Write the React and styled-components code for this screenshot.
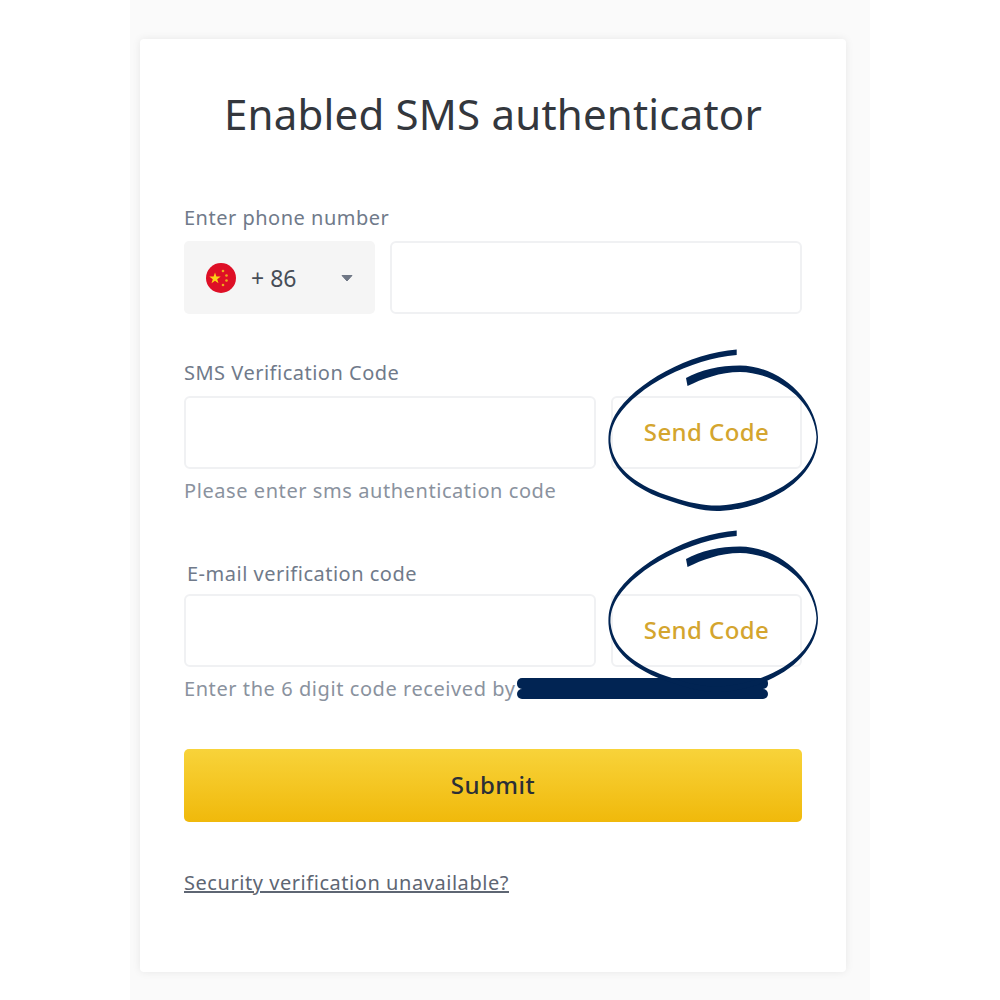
import React from 'react'
import styled, { createGlobalStyle } from 'styled-components';

const GlobalStyle = createGlobalStyle`
  html, body {
    margin: 0;
    padding: 0;
    background: #fff;
    font-family: "Noto Sans", "Open Sans", sans-serif;
  }
`;

const Page = styled.div`
  box-sizing: border-box;
  width: 740px;
  height: 1000px;
  margin-left: 130px;
  padding: 39px 24px 0 10px;
  background: #fafafa;
`;

const Card = styled.div`
  box-sizing: border-box;
  height: 933px;
  padding: 0 44px;
  background: #fff;
  border-radius: 4px;
  box-shadow: 0 0 8px rgba(0, 0, 0, 0.08);
`;

const Title = styled.h1`
  margin: 0;
  padding-top: 49px;
  height: 52px;
  line-height: 52px;
  font-size: 42px;
  font-weight: 400;
  letter-spacing: 0.2px;
  color: #33373d;
  text-align: center;
`;

const Section = styled.div`
  position: relative;
  margin-top: ${({ top }) => top}px;
`;

const Label = styled.div`
  height: 24px;
  line-height: 24px;
  margin-bottom: ${({ gap }) => gap}px;
  padding-left: ${({ indent }) => indent || 0}px;
  font-size: 20px;
  letter-spacing: 0.5px;
  color: #707a8a;
`;

const Row = styled.div`
  display: flex;
  gap: 15px;
`;

const Select = styled.div`
  box-sizing: border-box;
  display: flex;
  align-items: center;
  flex: 0 0 191px;
  height: 73px;
  padding: 0 22px 0 22px;
  background: #f5f5f5;
  border-radius: 5px;
`;

const Code = styled.span`
  margin-left: 15px;
  font-size: 23px;
  color: #474d57;
  flex: 1;
`;

const Field = styled.div`
  box-sizing: border-box;
  flex: 1;
  height: 73px;
  background: #fff;
  border: 2px solid #f0f1f3;
  border-radius: 6px;
`;

const SendButton = styled.div`
  box-sizing: border-box;
  flex: 0 0 191px;
  display: flex;
  align-items: center;
  justify-content: center;
  height: 73px;
  padding-bottom: 2px;
  background: #fff;
  border: 2px solid #f0f1f3;
  border-radius: 6px;
  font-size: 24px;
  font-weight: 500;
  letter-spacing: 0.4px;
  color: #d4a52e;
`;

const Helper = styled.div`
  display: flex;
  align-items: center;
  height: 24px;
  line-height: 24px;
  margin-top: 10px;
  font-size: 20px;
  letter-spacing: 0.57px;
  color: #8a929e;
`;

const Redaction = styled.span`
  display: inline-flex;
  flex-direction: column;
  margin-left: 1px;
  margin-top: -1px;
`;

const RedactionLine = styled.span`
  display: block;
  width: 251px;
  height: 10.5px;
  background: #012453;
  border-radius: 5px;
`;

const Scribble = styled.svg`
  position: absolute;
  left: 406px;
  top: ${({ top }) => top}px;
  width: 240px;
  height: 180px;
  pointer-events: none;
`;

const Submit = styled.div`
  display: flex;
  align-items: center;
  justify-content: center;
  height: 73px;
  margin-top: 48px;
  padding-bottom: 2px;
  box-sizing: border-box;
  background: linear-gradient(180deg, #f8d33a 0%, #f0b90b 100%);
  border-radius: 5px;
  font-size: 24px;
  font-weight: 500;
  letter-spacing: 0.5px;
  color: #2b2f36;
`;

const HelpLink = styled.a`
  display: inline-block;
  margin-top: 48px;
  line-height: 26px;
  font-size: 20px;
  letter-spacing: 0.55px;
  color: #5e6673;
  text-decoration: underline;
`;

const ChinaFlag = () => (
  <svg width="30" height="30" viewBox="0 0 30 30">
    <circle cx="15" cy="15" r="15" fill="#de0f26" />
    <polygon points="9,9.5 10.4,13.6 14.7,13.6 11.2,16.2 12.5,20.3 9,17.8 5.5,20.3 6.8,16.2 3.3,13.6 7.6,13.6" fill="#fcd116" />
    <circle cx="17" cy="8" r="1.3" fill="#f0a81c" />
    <circle cx="20.5" cy="12.5" r="1.3" fill="#f0a81c" />
    <circle cx="20.5" cy="17.5" r="1.3" fill="#f0a81c" />
    <circle cx="17" cy="22" r="1.3" fill="#f0a81c" />
  </svg>
);

const Caret = () => (
  <svg width="12" height="8" viewBox="0 0 12 8">
    <path d="M1 1.5h10L6 7z" fill="#6f7785" stroke="#6f7785" strokeLinejoin="round" />
  </svg>
);

const Circle = ({ top }) => (
  <Scribble top={top} viewBox="0 0 240 180">
    <path
      d="M146.7 9.500C100 13 45 42 25 75C20 84 18 92 18.500 103C20 130 45 150 80 161C100 168 115 171.500 130 171C180 168 228 138 228 97C227 60 190 26 150 25.500C130 25.500 110 30 96 38L97.500 46C112 39 130 32 150 32C188 32.500 225 62 226.500 97C225 135 180 162 130 165.500C115 166 100 163 82 157C50 147 23 130 20.500 102C20 92 23 84 28 76C48 46 100 19 146.700 15Z"
      fill="#012453"
    />
  </Scribble>
);

const App = () => {
  return (
    <Page>
      <GlobalStyle />
      <Card>
        <Title>Enabled SMS authenticator</Title>

        <Section top={66}>
          <Label gap={11}>Enter phone number</Label>
          <Row>
            <Select>
              <ChinaFlag />
              <Code>+ 86</Code>
              <Caret />
            </Select>
            <Field />
          </Row>
        </Section>

        <Section top={47}>
          <Label gap={11}>SMS Verification Code</Label>
          <Row>
            <Field />
            <SendButton>Send Code</SendButton>
          </Row>
          <Helper>Please enter sms authentication code</Helper>
          <Circle top={-21} />
        </Section>

        <Section top={59}>
          <Label gap={8} indent={3}>E-mail verification code</Label>
          <Row>
            <Field />
            <SendButton>Send Code</SendButton>
          </Row>
          <Helper>
            Enter the 6 digit code received by
            <Redaction>
              <RedactionLine />
              <RedactionLine />
            </Redaction>
          </Helper>
          <Circle top={-41} />
        </Section>

        <Submit>Submit</Submit>
        <HelpLink href="#">Security verification unavailable?</HelpLink>
      </Card>
    </Page>
  )
}

export default App
